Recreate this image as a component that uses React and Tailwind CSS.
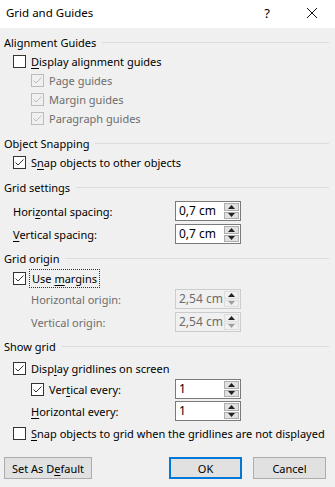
import React from 'react';

function Check({ checked, disabled }) {
    const border = disabled ? 'border-[#bcbcbc] bg-[#f0f0f0]' : 'border-[#333333] bg-white';
    const stroke = disabled ? '#bcbcbc' : '#333333';
    return (
        <span className={`relative inline-block w-[13px] h-[13px] border shrink-0 ${border}`}>
            {checked && (
                <svg width="11" height="11" viewBox="0 0 11 11" className="absolute left-0 top-0">
                    <polyline points="1.5,5.5 4,8 9.5,2.5" fill="none" stroke={stroke} strokeWidth="1" />
                </svg>
            )}
        </span>
    );
}

function Header({ title, className = '' }) {
    return (
        <div className={`flex items-center h-[19px] pl-[4px] pr-[6px] ${className}`}>
            <span>{title}</span>
            <div className="flex-1 ml-[6px] h-px bg-[#dcdcdc]" />
        </div>
    );
}

function Spin({ value, disabled }) {
    return (
        <div className={`flex w-[66px] h-[20px] border ${disabled ? 'border-[#cccccc] bg-[#f0f0f0] text-[#6d6d6d]' : 'border-[#7a7a7a] bg-white'}`}>
            <div className="flex-1 flex items-center pl-[3px] text-[12px]">{value}</div>
            <div className="flex flex-col w-[16px] py-px pr-px gap-px">
                <div className={`flex-1 flex items-center justify-center border ${disabled ? 'border-[#dddddd] bg-[#f0f0f0]' : 'border-[#adadad] bg-[#e1e1e1]'}`}>
                    <svg width="7" height="4" viewBox="0 0 7 4"><polygon points="0,4 7,4 3.5,0" fill="#222" /></svg>
                </div>
                <div className={`flex-1 flex items-center justify-center border ${disabled ? 'border-[#dddddd] bg-[#f0f0f0]' : 'border-[#adadad] bg-[#e1e1e1]'}`}>
                    <svg width="7" height="4" viewBox="0 0 7 4"><polygon points="0,0 7,0 3.5,4" fill={disabled ? '#a0a0a0' : '#222'} /></svg>
                </div>
            </div>
        </div>
    );
}

function U({ children }) {
    return <span className="underline underline-offset-2">{children}</span>;
}

export default function App() {
    return (
        <div
            className="w-[335px] h-[487px] bg-[#f0f0f0] text-black text-[11px] leading-none whitespace-nowrap overflow-hidden"
            style={{ fontFamily: '"Noto Sans", "Open Sans", sans-serif' }}
        >
            <div className="flex items-center h-[28px] bg-white pl-[6px] pb-[2px]">
                <span className="flex-1 text-[11.5px]">Grid and Guides</span>
                <span className="mr-[36px] text-[13px]">?</span>
                <svg width="12" height="12" viewBox="0 0 12 12" className="mr-[17px]">
                    <path d="M1 1 L11 11 M11 1 L1 11" stroke="#111" strokeWidth="1" />
                </svg>
            </div>

            <div className="flex flex-col pt-[5px]">
                <Header title="Alignment Guides" />
                <div className="flex items-center gap-[5px] h-[19px] pl-[13px]">
                    <Check /> <span><U>D</U>isplay alignment guides</span>
                </div>
                {['Page guides', 'Margin guides', 'Paragraph guides'].map((t) => (
                    <div key={t} className="flex items-center gap-[5px] h-[19px] pl-[31px] text-[#6d6d6d]">
                        <Check checked disabled /> <span>{t}</span>
                    </div>
                ))}

                <Header title="Object Snapping" className="mt-[6px]" />
                <div className="flex items-center gap-[5px] h-[19px] pl-[13px]">
                    <Check checked /> <span>S<U>n</U>ap objects to other objects</span>
                </div>

                <Header title="Grid settings" className="mt-[6px]" />
                <div className="flex items-center mt-[4px] pl-[13px]">
                    <span className="w-[162px]">Hori<U>z</U>ontal spacing:</span>
                    <Spin value="0,7 cm" />
                </div>
                <div className="flex items-center mt-[3px] pl-[13px]">
                    <span className="w-[162px]"><U>V</U>ertical spacing:</span>
                    <Spin value="0,7 cm" />
                </div>

                <Header title="Grid origin" className="mt-[5px]" />
                <div className="flex items-center gap-[3px] h-[21px] pl-[13px]">
                    <Check checked />
                    <span className="border border-dotted border-[#333] px-[2px] py-[3px]">Use <U>m</U>argins</span>
                </div>
                <div className="flex items-center pl-[31px] text-[#6d6d6d]">
                    <span className="w-[144px]">Horizontal origin:</span>
                    <Spin value="2,54 cm" disabled />
                </div>
                <div className="flex items-center mt-[3px] pl-[31px] text-[#6d6d6d]">
                    <span className="w-[144px]">Vertical origin:</span>
                    <Spin value="2,54 cm" disabled />
                </div>

                <Header title="Show grid" className="mt-[5px]" />
                <div className="flex items-center gap-[5px] h-[20px] mt-[2px] pl-[13px]">
                    <Check checked /> <span>Disp<U>l</U>ay gridlines on screen</span>
                </div>
                <div className="flex items-center mt-[1px] pl-[31px]">
                    <div className="flex items-center gap-[5px] w-[144px]">
                        <Check checked /> <span>Ver<U>t</U>ical every:</span>
                    </div>
                    <Spin value="1" />
                </div>
                <div className="flex items-center mt-[2px] pl-[31px]">
                    <span className="w-[144px]"><U>H</U>orizontal every:</span>
                    <Spin value="1" />
                </div>
                <div className="flex items-center gap-[5px] h-[20px] mt-[2px] pl-[13px]">
                    <Check /> <span><U>S</U>nap objects to grid when the gridlines are not displayed</span>
                </div>

                <div className="flex items-center mt-[14px] px-[4px]">
                    <button className="w-[88px] h-[22px] border border-[#adadad] bg-[#e1e1e1]">
                        Set As D<U>e</U>fault
                    </button>
                    <div className="flex-1" />
                    <button className="w-[73px] h-[22px] border-2 border-[#0078d7] bg-[#e1e1e1]">OK</button>
                    <button className="w-[73px] h-[22px] ml-[11px] mr-[5px] border border-[#adadad] bg-[#e1e1e1]">Cancel</button>
                </div>
            </div>
        </div>
    );
}
